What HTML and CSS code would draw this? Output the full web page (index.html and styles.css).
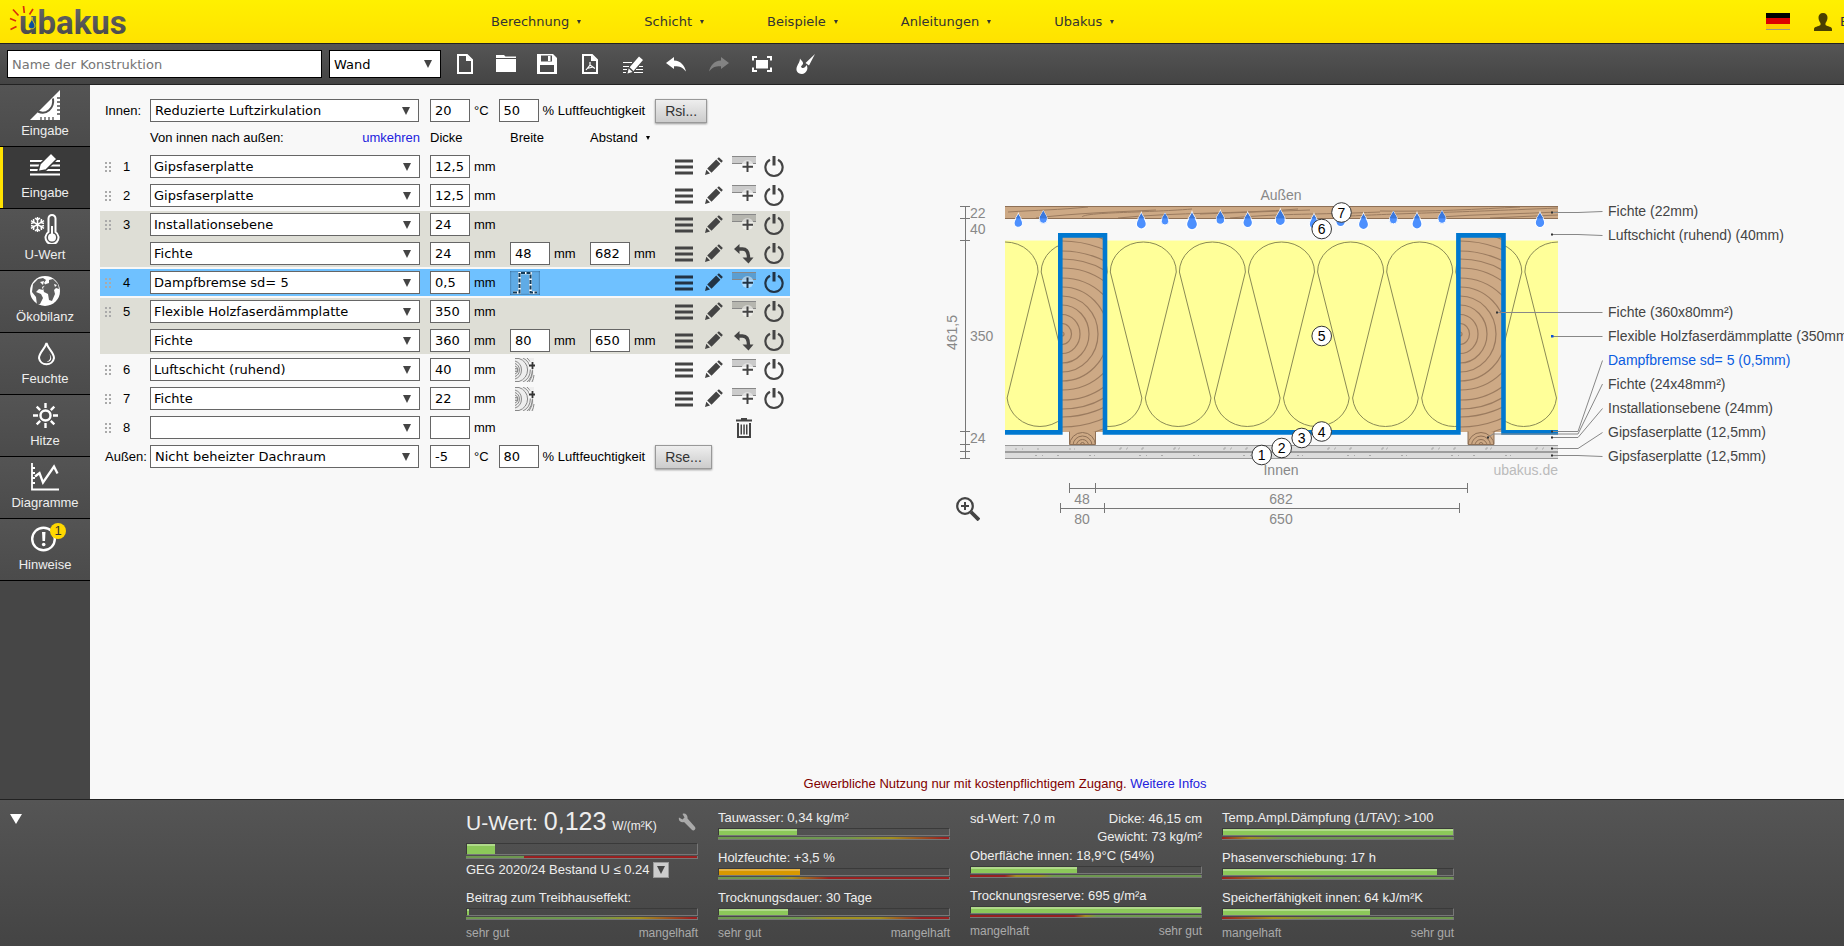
FILE: index.html
```html
<!DOCTYPE html>
<html lang="de">
<head>
  <meta charset="UTF-8">
  <meta name="viewport" content="width=device-width, initial-scale=1.0">
  <title>Ubakus</title>
  <link rel="stylesheet" href="styles.css">
</head>
<body>
  <!-- Icons -->
  <svg class="sprite" aria-hidden="true">
    <symbol id="i-menu" viewBox="0 0 18 18"><path d="M0 1.500h18v3H0zM0 7.500h18v3H0zM0 13.500h18v3H0z"/></symbol>
    <symbol id="i-pencil" viewBox="0 0 18 20"><path d="M0 18l1.300-5.200L5 16.600zM2.200 11.400L11.200 2.600l4.200 4.200-8.900 8.900zM12.200 1.700L13.900.2l4 3.900-1.600 1.700z"/></symbol>
    <symbol id="i-add" viewBox="0 0 24 22">
      <path fill="#000" opacity=".18" d="M0 0h24v8H0z"/>
      <path stroke="#888" d="M0 .5h24M0 7.500h10M21 7.500h3" fill="none"/>
      <circle cx="15.500" cy="10" r="6" fill="#fff" opacity=".45"/>
      <path d="M15.500 5.500v10.500M10.500 10.700h10.500" stroke="currentColor" stroke-width="2"/>
    </symbol>
    <symbol id="i-power" viewBox="0 0 20 22"><path d="M6 3.800a8.600 8.600 0 1 0 8 0" fill="none" stroke="currentColor" stroke-width="2.200"/><path d="M8.500 0h3v9.500h-3z"/></symbol>
    <symbol id="i-turn" viewBox="0 0 20 20"><path d="M0 5l5.500-5v10zM8.500 13.500h11L14.500 19.500z"/><path d="M5 5h3.500c4.500 0 6 3 6 9" fill="none" stroke="currentColor" stroke-width="3.400"/></symbol>
    <symbol id="i-trash" viewBox="0 0 16 20"><path d="M0 1.500h5V0h6v1.500h5v2H0zM1 5h14v15H1zM3 5v13h10V5z" fill-rule="evenodd"/><path d="M4.500 6.500h1.500v10H4.500zM7.300 6.500h1.500v10H7.300zM10 6.500h1.500v10H10z"/></symbol>
    <symbol id="i-wood" viewBox="0 0 20 24">
      <path d="M0 0h19v24H0z" fill="#eee"/>
      <g fill="none" stroke="#888"><circle cx="1" cy="12" r="1.500"/><path d="M0 8a4.200 4.200 0 0 1 0 8M0 5.500a7 7 0 0 1 0 13M0 3a9.500 9.500 0 0 1 0 18M0 .5h4a12 12 0 0 1 0 23H0M8 0a13.500 13.500 0 0 1 0 24M12 0a16 16 0 0 1 0 24M17.500 13a18 18 0 0 1-3.500 11M19 17a18 18 0 0 1-2 7"/></g>
      <path d="M14 3.500h7v8h-7z" fill="#f8f8f8"/><path d="M17.500 4v7M14 7.500h6" stroke="#333" stroke-width="1.800"/>
    </symbol>
  </svg>

  <header class="header">
    <a class="logo" href="#" aria-label="ubakus">
      <svg width="130" height="43" viewBox="0 0 130 43">
        <defs><linearGradient id="lg" x1="0" y1="0" x2="0" y2="1"><stop offset="0" stop-color="#6a6a6a"/><stop offset="1" stop-color="#444"/></linearGradient></defs>
        <text class="wordmark" x="19" y="34" fill="url(#lg)">ubakus</text>
        <path d="M32 17c.5 4-4 6-3.500 9.500.6 3 5.800 3.200 6.500-.3.500-3-3.500-5-3-9.200z" fill="#0a4ea0" stroke="#ffe900" stroke-width=".8"/>
        <path d="M10 18.500l6 2.500M13 9.500l5.500 6M23.500 6l.8 7M33 9l-3.500 5.500M10.500 29.500l6-3" stroke="#d8300c" stroke-width="1.700" fill="none"/>
      </svg>
    </a>
    <nav class="nav">
      <a class="caret" href="#">Berechnung</a>
      <a class="caret" href="#">Schicht</a>
      <a class="caret" href="#">Beispiele</a>
      <a class="caret" href="#">Anleitungen</a>
      <a class="caret" href="#">Ubakus</a>
    </nav>
    <div class="account">
      <span class="flag"></span>
      <svg width="18" height="18" viewBox="0 0 18 18" fill="#4a4000"><path d="M9 0c3 0 4.700 2 4.500 5-.2 2.500-1.300 4-2 5v2c2 1.500 6.500 1.500 6.500 4v2H0v-2c0-2.500 4.500-2.500 6.500-4v-2c-.7-1-1.800-2.500-2-5C4.300 2 6 0 9 0z"/></svg>
      <a href="#">E</a>
    </div>
  </header>

  <div class="toolbar">
    <input class="name" type="text" placeholder="Name der Konstruktion" aria-label="Name der Konstruktion">
    <span class="select type"><select aria-label="Bauteil"><option>Wand</option></select></span>
    <div class="tools">
      <button type="button" aria-label="Neu"><svg viewBox="0 0 20 20"><path d="M3 1h9l5 5v13H3z" fill="none" stroke="#fff" stroke-width="2"/><path d="M11 1v6h6z"/></svg></button>
      <button type="button" aria-label="Öffnen"><svg viewBox="0 0 20 20"><path d="M0 1h8l1.500 1.500H20V4H0zM0 5h20v13H0z"/></svg></button>
      <button type="button" aria-label="Speichern"><svg viewBox="0 0 20 20"><path d="M0 0h16l4 4v16H0zM4 1.500v6h11v-6zM3 11v7h14v-7z" fill-rule="evenodd"/><path d="M11 2h2.500v5H11z"/></svg></button>
    </div>
    <div class="tools wide">
      <button type="button" aria-label="PDF"><svg viewBox="0 0 20 20"><path d="M3 1h9l5 5v13H3z" fill="none" stroke="#fff" stroke-width="2"/><path d="M11 1v6h6z"/><path d="M10 8v3l-4 5M10 11l5 3.500M7 14.500l6-1.500" fill="none" stroke="#fff" stroke-width="1.200"/></svg></button>
      <button type="button" aria-label="Bearbeiten"><svg viewBox="0 0 20 20"><path d="M0 8.500h9M0 12.500h6M0 15.500h4M0 18.500h3M16 12.500h4M13 15.500h7M11 18.500h9" stroke="#fff" stroke-width="1.200"/><path d="M4.500 19.500l1.200-5 3.800 3.500zM6.700 13.200L16 2.500l4 3.500-9.500 11z"/></svg></button>
      <button type="button" aria-label="Rückgängig"><svg viewBox="0 0 20 20"><path d="M0 9l8-6v3.500c7 .5 10.500 5 12 11-3.500-4.500-7-5.500-12-5.300V15z"/></svg></button>
    </div>
    <div class="tools wide">
      <button type="button" class="off" aria-label="Wiederholen"><svg viewBox="0 0 20 20"><path d="M20 9l-8-6v3.500C5 7 1.500 11.500 0 17.500c3.500-4.500 7-5.500 12-5.300V15z"/></svg></button>
      <button type="button" aria-label="Vollbild"><svg viewBox="0 0 20 20"><path d="M4 6h12v8.500H4z"/><path d="M1 6.500V3h4M15 3h4v3.500M19 13.500V17h-4M5 17H1v-3.500" fill="none" stroke="#fff" stroke-width="2"/></svg></button>
      <button type="button" aria-label="Farben"><svg viewBox="0 0 20 20"><path d="M20 0l-6 11.500-3.500-2.500zM5 4.500c1 2 3.500 3 3 5.500L6 12.500c1 2.500 4 2 5.500-1.500 2.500 3.500-.5 9-4.500 9-5 0-6.500-4-5-7.500C3 9.500 5 8 5 4.500z"/></svg></button>
    </div>
  </div>

  <div class="main">
    <nav class="sidebar">
      <a href="#"><svg viewBox="0 0 30 30"><path d="M30 0v30H0z"/><path d="M8 21.500c8 4 16.500-3 15-13" fill="none" stroke="#505050" stroke-width="2"/><path d="M11 27v3M15 27v3M19 27v3M23 27v3M27 24h3M27 20h3M27 16h3M27 12h3M27 8h3" stroke="#505050" stroke-width="1.300"/></svg>Eingabe</a>
      <a href="#" class="active"><svg viewBox="0 0 30 30"><path d="M0 9h30M0 13.500h30M0 18h30M0 22.500h30" stroke="#fff" stroke-width="2"/><path d="M8 19.500l2-7.500L21 1l6 6-11 11z" fill="#fff" stroke="#3a3a3a" stroke-width="1.500"/></svg>Eingabe</a>
      <a href="#"><svg viewBox="0 0 30 30"><path d="M7.500 3v15M1 6.700l13 7.600M1 14.300l13-7.600M5 4l2.500 2L10 4M5 17l2.500-2 2.500 2M1 9.500L4 8.500 3.500 5M11.500 16l-.5-3.500 3-1M1 11.500l3 1L3.500 16M11.500 5L11 8.500l3 1" fill="none" stroke="#fff" stroke-width="1.500"/><path d="M18.500 18V4.500a3.500 3.500 0 0 1 7 0V18a6.500 6.500 0 1 1-7 0z" fill="none" stroke="#fff" stroke-width="2"/><circle cx="22" cy="23.500" r="4"/><path d="M22 12v10" stroke="#fff" stroke-width="2"/></svg>U-Wert</a>
      <a href="#"><svg viewBox="0 0 30 30"><circle cx="15" cy="15" r="15"/><path d="M3 8l5-5 5-1 3 2-2 3 2 2-4 2 1 3-4-1-3 3 5 2 2 4-3 6-3 1-1-8-4-5zM19 4l4-1 5 5 1 5-3-1-2 2 1 4-3 7-3-1-1-6-4-2-1-4 3-4 3-1z" fill="#505050" opacity=".92"/><path d="M10 6l4-1-1 4zM24 8l3 1-2 2z"/></svg>Ökobilanz</a>
      <a href="#"><svg viewBox="0 0 30 30"><path d="M16.500 5C15 11 9 14.500 9 20a7.600 7.600 0 0 0 15 0c0-5.500-6-9-7.500-15z" fill="none" stroke="#fff" stroke-width="2"/><path d="M19.500 16c2 5-.5 7-3 8 5 0 6-4 3-8z"/></svg>Feuchte</a>
      <a href="#"><svg viewBox="0 0 30 30"><g fill="none" stroke="#fff" stroke-width="2.400"><circle cx="15.500" cy="15.500" r="5"/><path d="M15.500 3v5M15.500 23v5M3 15.500h5M23 15.500h5M6.700 6.700l3.500 3.500M20.800 20.800l3.500 3.500M6.700 24.300l3.500-3.500M20.800 10.200l3.500-3.500"/></g></svg>Hitze</a>
      <a href="#"><svg viewBox="0 0 30 30"><path d="M2 1v26.500h27M2 6h3M2 11h3M2 16h3M2 21h3" fill="none" stroke="#fff" stroke-width="1.800"/><path d="M5 14.500l4.500-3.500 3.500 9.500L24 4.500l3.500 7" fill="none" stroke="#fff" stroke-width="2.300"/></svg>Diagramme</a>
      <a href="#"><svg viewBox="0 0 30 30"><circle cx="13.500" cy="15" r="11.300" fill="none" stroke="#fff" stroke-width="2.400"/><path d="M12 8h3.500l-.5 9h-2.500z"/><circle cx="13.700" cy="20.500" r="1.800"/></svg>Hinweise<span class="badge">1</span></a>
    </nav>

    <main class="content">
      <form class="editor">
        <div class="climate">
          <label for="innen">Innen:</label>
          <span class="select"><select id="innen"><option>Reduzierte Luftzirkulation</option></select></span>
          <span class="field"><input type="text" value="20" aria-label="Temperatur innen">°C</span>
          <span class="field"><input type="text" value="50" aria-label="Luftfeuchtigkeit innen">% Luftfeuchtigkeit</span>
          <button type="button">Rsi...</button>
        </div>
        <div class="row head">
          <span class="direction">Von innen nach außen: <a href="#">umkehren</a></span>
          <span>Dicke</span>
          <span>Breite</span>
          <span class="caret">Abstand</span>
        </div>

        <div class="layer">
          <div class="row">
            <span class="num">1</span>
            <span class="select"><select aria-label="Schicht 1"><option>Gipsfaserplatte</option></select></span>
            <span class="field"><input type="text" value="12,5" aria-label="Dicke">mm</span>
            <span class="actions">
              <button type="button" aria-label="Menü"><svg width="18" height="18"><use href="#i-menu"/></svg></button>
              <button type="button" aria-label="Bearbeiten"><svg width="18" height="20"><use href="#i-pencil"/></svg></button>
              <button type="button" aria-label="Einfügen"><svg width="24" height="22"><use href="#i-add"/></svg></button>
              <button type="button" aria-label="Ausschalten"><svg width="20" height="22"><use href="#i-power"/></svg></button>
            </span>
          </div>
        </div>
        <div class="layer">
          <div class="row">
            <span class="num">2</span>
            <span class="select"><select aria-label="Schicht 2"><option>Gipsfaserplatte</option></select></span>
            <span class="field"><input type="text" value="12,5" aria-label="Dicke">mm</span>
            <span class="actions">
              <button type="button" aria-label="Menü"><svg width="18" height="18"><use href="#i-menu"/></svg></button>
              <button type="button" aria-label="Bearbeiten"><svg width="18" height="20"><use href="#i-pencil"/></svg></button>
              <button type="button" aria-label="Einfügen"><svg width="24" height="22"><use href="#i-add"/></svg></button>
              <button type="button" aria-label="Ausschalten"><svg width="20" height="22"><use href="#i-power"/></svg></button>
            </span>
          </div>
        </div>
        <div class="layer group">
          <div class="row">
            <span class="num">3</span>
            <span class="select"><select aria-label="Schicht 3"><option>Installationsebene</option></select></span>
            <span class="field"><input type="text" value="24" aria-label="Dicke">mm</span>
            <span class="actions">
              <button type="button" aria-label="Menü"><svg width="18" height="18"><use href="#i-menu"/></svg></button>
              <button type="button" aria-label="Bearbeiten"><svg width="18" height="20"><use href="#i-pencil"/></svg></button>
              <button type="button" aria-label="Einfügen"><svg width="24" height="22"><use href="#i-add"/></svg></button>
              <button type="button" aria-label="Ausschalten"><svg width="20" height="22"><use href="#i-power"/></svg></button>
            </span>
          </div>
          <div class="row">
            <span class="select"><select aria-label="Balken 3"><option>Fichte</option></select></span>
            <span class="field"><input type="text" value="24" aria-label="Dicke">mm</span>
            <span class="field"><input type="text" value="48" aria-label="Breite">mm</span>
            <span class="field"><input type="text" value="682" aria-label="Abstand">mm</span>
            <span class="actions">
              <button type="button" aria-label="Menü"><svg width="18" height="18"><use href="#i-menu"/></svg></button>
              <button type="button" aria-label="Bearbeiten"><svg width="18" height="20"><use href="#i-pencil"/></svg></button>
              <button type="button" aria-label="Drehen"><svg width="20" height="20"><use href="#i-turn"/></svg></button>
              <button type="button" aria-label="Ausschalten"><svg width="20" height="22"><use href="#i-power"/></svg></button>
            </span>
          </div>
        </div>
        <div class="layer selected">
          <div class="row">
            <span class="num">4</span>
            <span class="select"><select aria-label="Schicht 4"><option>Dampfbremse sd= 5</option></select></span>
            <span class="field"><input type="text" value="0,5" aria-label="Dicke">mm</span>
            <button type="button" class="wrap" aria-label="Verlauf"><svg width="28" height="22" viewBox="0 0 28 22" fill="none"><path d="M2 20.500h6.500V1h11v19.500H26" stroke="#fff" stroke-width="2.500"/><path d="M2 20.500h6.500V1h11v19.500H26" stroke="#123a58" stroke-width="2" stroke-dasharray="4 1.500"/></svg></button>
            <span class="actions">
              <button type="button" aria-label="Menü"><svg width="18" height="18"><use href="#i-menu"/></svg></button>
              <button type="button" aria-label="Bearbeiten"><svg width="18" height="20"><use href="#i-pencil"/></svg></button>
              <button type="button" aria-label="Einfügen"><svg width="24" height="22"><use href="#i-add"/></svg></button>
              <button type="button" aria-label="Ausschalten"><svg width="20" height="22"><use href="#i-power"/></svg></button>
            </span>
          </div>
        </div>
        <div class="layer group">
          <div class="row">
            <span class="num">5</span>
            <span class="select"><select aria-label="Schicht 5"><option>Flexible Holzfaserdämmplatte</option></select></span>
            <span class="field"><input type="text" value="350" aria-label="Dicke">mm</span>
            <span class="actions">
              <button type="button" aria-label="Menü"><svg width="18" height="18"><use href="#i-menu"/></svg></button>
              <button type="button" aria-label="Bearbeiten"><svg width="18" height="20"><use href="#i-pencil"/></svg></button>
              <button type="button" aria-label="Einfügen"><svg width="24" height="22"><use href="#i-add"/></svg></button>
              <button type="button" aria-label="Ausschalten"><svg width="20" height="22"><use href="#i-power"/></svg></button>
            </span>
          </div>
          <div class="row">
            <span class="select"><select aria-label="Balken 5"><option>Fichte</option></select></span>
            <span class="field"><input type="text" value="360" aria-label="Dicke">mm</span>
            <span class="field"><input type="text" value="80" aria-label="Breite">mm</span>
            <span class="field"><input type="text" value="650" aria-label="Abstand">mm</span>
            <span class="actions">
              <button type="button" aria-label="Menü"><svg width="18" height="18"><use href="#i-menu"/></svg></button>
              <button type="button" aria-label="Bearbeiten"><svg width="18" height="20"><use href="#i-pencil"/></svg></button>
              <button type="button" aria-label="Drehen"><svg width="20" height="20"><use href="#i-turn"/></svg></button>
              <button type="button" aria-label="Ausschalten"><svg width="20" height="22"><use href="#i-power"/></svg></button>
            </span>
          </div>
        </div>
        <div class="layer">
          <div class="row">
            <span class="num">6</span>
            <span class="select"><select aria-label="Schicht 6"><option>Luftschicht (ruhend)</option></select></span>
            <span class="field"><input type="text" value="40" aria-label="Dicke">mm</span>
            <button type="button" class="beam" aria-label="Balken hinzufügen"><svg width="20" height="24"><use href="#i-wood"/></svg></button>
            <span class="actions">
              <button type="button" aria-label="Menü"><svg width="18" height="18"><use href="#i-menu"/></svg></button>
              <button type="button" aria-label="Bearbeiten"><svg width="18" height="20"><use href="#i-pencil"/></svg></button>
              <button type="button" aria-label="Einfügen"><svg width="24" height="22"><use href="#i-add"/></svg></button>
              <button type="button" aria-label="Ausschalten"><svg width="20" height="22"><use href="#i-power"/></svg></button>
            </span>
          </div>
        </div>
        <div class="layer">
          <div class="row">
            <span class="num">7</span>
            <span class="select"><select aria-label="Schicht 7"><option>Fichte</option></select></span>
            <span class="field"><input type="text" value="22" aria-label="Dicke">mm</span>
            <button type="button" class="beam" aria-label="Balken hinzufügen"><svg width="20" height="24"><use href="#i-wood"/></svg></button>
            <span class="actions">
              <button type="button" aria-label="Menü"><svg width="18" height="18"><use href="#i-menu"/></svg></button>
              <button type="button" aria-label="Bearbeiten"><svg width="18" height="20"><use href="#i-pencil"/></svg></button>
              <button type="button" aria-label="Einfügen"><svg width="24" height="22"><use href="#i-add"/></svg></button>
              <button type="button" aria-label="Ausschalten"><svg width="20" height="22"><use href="#i-power"/></svg></button>
            </span>
          </div>
        </div>
        <div class="layer">
          <div class="row">
            <span class="num">8</span>
            <span class="select"><select aria-label="Schicht 8"><option></option></select></span>
            <span class="field"><input type="text" value="" aria-label="Dicke">mm</span>
            <span class="actions">
              <button type="button" class="trash" aria-label="Löschen"><svg width="16" height="20"><use href="#i-trash"/></svg></button>
            </span>
          </div>
        </div>

        <div class="climate outer">
          <label for="aussen">Außen:</label>
          <span class="select"><select id="aussen"><option>Nicht beheizter Dachraum</option></select></span>
          <span class="field"><input type="text" value="-5" aria-label="Temperatur außen">°C</span>
          <span class="field"><input type="text" value="80" aria-label="Luftfeuchtigkeit außen">% Luftfeuchtigkeit</span>
          <button type="button">Rse...</button>
        </div>
      </form>

      <!-- Cross section -->
      <div class="drawing">
        <svg class="section" width="914" height="360" viewBox="930 180 914 360">
          <defs>
            <clipPath id="c-wall"><path d="M1005 200h553v262h-553z"/></clipPath>
            <clipPath id="c-board"><path d="M1005 206h553v12.500h-553z"/></clipPath>
            <clipPath id="c-post"><path d="M0 0h42v195H0z"/></clipPath>
            <clipPath id="c-batten"><path d="M0 0h26v13H0z"/></clipPath>
            <path id="drop" d="M0-8C-1-5-5-1-5 3a5 5 0 0 0 10 0C5-1 1-5 0-8z"/>
            <g id="post">
              <path d="M0 0h42v195H0z" fill="#cda985"/>
              <g clip-path="url(#c-post)" fill="none" stroke="#9b7b5f" stroke-width="1.200">
                <ellipse cx="0" cy="97" rx="2" ry="2"/><ellipse cx="0" cy="97" rx="9.500" ry="10.500"/><ellipse cx="0" cy="97" rx="18" ry="19.500"/><ellipse cx="0" cy="97" rx="27" ry="29"/><ellipse cx="0" cy="97" rx="36" ry="38"/><ellipse cx="0" cy="97" rx="46" ry="47"/><ellipse cx="0" cy="97" rx="58" ry="56"/><ellipse cx="0" cy="97" rx="70" ry="66"/><ellipse cx="0" cy="97" rx="80" ry="75"/><ellipse cx="0" cy="97" rx="90" ry="83"/><ellipse cx="0" cy="97" rx="100" ry="93"/><ellipse cx="0" cy="97" rx="106" ry="103"/>
              </g>
            </g>
            <g id="batten">
              <path d="M0 0h26v13H0z" fill="#cda985"/>
              <g clip-path="url(#c-batten)" fill="none" stroke="#8e7056"><circle cx="13" cy="13" r="2"/><circle cx="13" cy="14" r="6"/><circle cx="13" cy="14" r="9.500"/><circle cx="13" cy="14" r="13"/></g>
              <path d="M0 0v13h26V0" fill="none" stroke="#8e7056"/>
            </g>
            <g id="drops">
              <use href="#drop" transform="translate(1018.300 220.500) scale(.85)"/>
              <use href="#drop" transform="translate(1043.300 217) scale(.8)"/>
              <use href="#drop" transform="translate(1141.300 221)"/>
              <use href="#drop" transform="translate(1165 219) scale(.75)"/>
              <use href="#drop" transform="translate(1192 221) scale(1.100)"/>
              <use href="#drop" transform="translate(1220.300 217.500) scale(.85)"/>
              <use href="#drop" transform="translate(1247.700 220) scale(.95)"/>
              <use href="#drop" transform="translate(1280.300 217.500)"/>
              <use href="#drop" transform="translate(1314 221.500) scale(.95)"/>
              <use href="#drop" transform="translate(1340.600 219) scale(.95)"/>
              <use href="#drop" transform="translate(1363.500 221.500)"/>
              <use href="#drop" transform="translate(1393.400 217.500) scale(.8)"/>
              <use href="#drop" transform="translate(1417 221)"/>
              <use href="#drop" transform="translate(1442 217) scale(.8)"/>
              <use href="#drop" transform="translate(1540 220) scale(.95)"/>
            </g>
          </defs>

          <g clip-path="url(#c-wall)">
            <path d="M1005 240.500h553v191.500h-553z" fill="#ff9"/>
            <path d="M972.100 272 a33 30 0 0 1 66 0 l-31 126 a33 31.500 0 0 0 65.700 0 l-31.600-126 a33 30 0 0 1 66 0 l-31 126 a33 31.500 0 0 0 65.700 0 l-31.600-126 a33 30 0 0 1 66 0 l-31 126 a33 31.500 0 0 0 65.700 0 l-31.600-126 a33 30 0 0 1 66 0 l-31 126 a33 31.500 0 0 0 65.700 0 l-31.600-126 a33 30 0 0 1 66 0 l-31 126 a33 31.500 0 0 0 65.700 0 l-31.600-126 a33 30 0 0 1 66 0 l-31 126 a33 31.500 0 0 0 65.700 0 l-31.600-126 a33 30 0 0 1 66 0 l-31 126 a33 31.500 0 0 0 65.700 0 l-31.600-126 a33 30 0 0 1 66 0 l-31 126 a33 31.500 0 0 0 65.700 0 l-31.600-126 a33 30 0 0 1 66 0 l-31 126" fill="none" stroke="#8a8a55"/>
            <path d="M1005 206h553v12.500h-553z" fill="#cda985"/>
            <path d="M1008 212c30-2 50-2 80-5M1036 218c40-5 80-6 120-8M1082 217c3-5 60-4 110-8M1118 218c60-6 120-4 180-9M1200 214l110-4M1230 218c60-5 80-3 150-6M1350 216c60-3 90-3 208-8M1380 211c50 1 100-2 140-4M1440 217c40-3 80-3 118-5M1490 218l68-3" fill="none" stroke="#9b7b5f"/>
            <path d="M1005 206.500h553M1005 218.500h553" stroke="#8e7056"/>
            <path d="M1005 445h553v14h-553z" fill="#dcdcdc"/>
            <path d="M1015 449h543M1035 455.500h523M1120 448h438" stroke="#aaa" stroke-dasharray="2 5 1 14 2 30 2 3 1 44"/>
            <path d="M1005 445.500h553M1005 458.500h553" stroke="#999"/>
            <path d="M1005 452h553" stroke="#888" stroke-width="1.500"/>
          </g>
          <use href="#post" x="1062" y="237"/>
          <use href="#post" x="1460" y="237"/>
          <use href="#batten" x="1069.500" y="431.500"/>
          <use href="#batten" x="1468" y="431.500"/>
          <path d="M1005 432.400h55.300V235.400h44.700v197h353.400v-197h45.100v197h54.500" fill="none" stroke="#0078d0" stroke-width="4.600"/>
          <use href="#drops" fill="#4d90fe" stroke="#fff" stroke-width="1.200"/>
          <use href="#drops" fill="#3a77dc" clip-path="url(#c-board)"/>

          <!-- Dimensions -->
          <g stroke="#777" fill="none">
            <path d="M965.500 206v253M960 206.500h10M960 218.500h10M960 240.500h10M960 431.500h10M960 444.500h10M960 451.500h10M960 458.500h10"/>
            <path d="M1069 488.500h399M1069.500 483v10M1095.500 483v10M1467.500 483v10M1060 508.500h399M1060.500 503v10M1104.500 503v10M1459.500 503v10"/>
          </g>
          <g class="dim">
            <text x="970" y="218">22</text><text x="970" y="234">40</text><text x="970" y="341">350</text><text x="970" y="443">24</text>
            <text x="957" y="350" transform="rotate(-90 957 350)">461,5</text>
            <g text-anchor="middle">
              <text x="1281" y="200">Außen</text><text x="1281" y="475">Innen</text>
              <text x="1082" y="504">48</text><text x="1281" y="504">682</text>
              <text x="1082" y="524">80</text><text x="1281" y="524">650</text>
            </g>
            <text class="mark" x="1558" y="475" text-anchor="end">ubakus.de</text>
          </g>

          <!-- Labels -->
          <g stroke="#888" fill="none">
            <path d="M1552 212.500h26l24.500-1M1552 234.500h26l24.500 1M1497 312.500h105.500M1552 336.500h50.500M1552 431.500h26l24.500-71M1488 437.500l5-3.500h85l24.500-50M1552 437.500h26l24.500-29M1552 448.500h26l24.500-16M1552 455.500h26l24.500 1"/>
          </g>
          <path d="M1551 211.500h2v2h-2zM1551 233.500h2v2h-2zM1496 311.500h2v2h-2zM1551 430.500h2v2h-2zM1487 436.500h2v2h-2zM1551 436.500h2v2h-2zM1551 447.500h2v2h-2zM1551 454.500h2v2h-2z" fill="#333"/>
          <path d="M1551 335h2.500v2.500h-2.500z" fill="#0a50d8"/>
          <g class="material">
            <text x="1608" y="216">Fichte (22mm)</text>
            <text x="1608" y="240">Luftschicht (ruhend) (40mm)</text>
            <text x="1608" y="317">Fichte (360x80mm²)</text>
            <text x="1608" y="341">Flexible Holzfaserdämmplatte (350mm)</text>
            <text class="current" x="1608" y="365">Dampfbremse sd= 5 (0,5mm)</text>
            <text x="1608" y="389">Fichte (24x48mm²)</text>
            <text x="1608" y="413">Installationsebene (24mm)</text>
            <text x="1608" y="437">Gipsfaserplatte (12,5mm)</text>
            <text x="1608" y="461">Gipsfaserplatte (12,5mm)</text>
          </g>
          <g fill="#fff" stroke="#333">
            <circle cx="1261.700" cy="455" r="9.800"/><circle cx="1281.700" cy="448" r="9.800"/><circle cx="1301.700" cy="438" r="9.800"/><circle cx="1321.700" cy="431.500" r="9.800"/><circle cx="1321.700" cy="336" r="9.800"/><circle cx="1321.700" cy="229" r="9.800"/><circle cx="1341.500" cy="212.500" r="9.800"/>
          </g>
          <g class="pin" text-anchor="middle">
            <text x="1261.700" y="460">1</text><text x="1281.700" y="453">2</text><text x="1301.700" y="443">3</text><text x="1321.700" y="436.500">4</text><text x="1321.700" y="341">5</text><text x="1321.700" y="234">6</text><text x="1341.500" y="217.500">7</text>
          </g>
        </svg>
        <button type="button" class="zoom" aria-label="Vergrößern"><svg width="24" height="24" viewBox="0 0 24 24" fill="none" stroke="#444"><circle cx="9" cy="9" r="7.800" stroke-width="2.200"/><path d="M9 5v8M5 9h8" stroke-width="2"/><path d="M15 15l8 8" stroke-width="3.800"/></svg></button>
      </div>

      <p class="notice">Gewerbliche Nutzung nur mit kostenpflichtigem Zugang. <a href="#">Weitere Infos</a></p>
    </main>
  </div>

  <footer class="results">
    <button type="button" class="collapse" aria-label="Einklappen"></button>
    <div class="columns">
      <section class="col">
        <div class="uwert">
          <span>U-Wert: <b>0,123</b> <small>W/(m²K)</small></span>
          <svg width="18" height="18" viewBox="0 0 18 18" fill="#aaa"><path d="M1 4.500l3.500 2 2-2L4.500 1C7-.500 10 2 9.500 5.500L17 14c1.500 2.500-1.500 4.500-3.200 2.800L6 9C3 10 0 7.500 1 4.500z"/></svg>
        </div>
        <div class="bar big"><i class="green" style="width: 12%"></i></div>
        <div class="scale limit"></div>
        <div class="geg">GEG 2020/24 Bestand U ≤ 0.24 <button type="button" aria-label="Auswahl"></button></div>
        <div class="metric">
          <h2>Beitrag zum Treibhauseffekt:</h2>
          <div class="bar"><i class="green" style="width: 1%"></i></div>
          <div class="scale late"></div>
        </div>
        <div class="legend"><span>sehr gut</span><span>mangelhaft</span></div>
      </section>
      <section class="col">
        <div class="metric">
          <h2>Tauwasser: 0,34 kg/m²</h2>
          <div class="bar"><i class="green" style="width: 34%"></i></div>
          <div class="scale late"></div>
        </div>
        <div class="metric">
          <h2>Holzfeuchte: +3,5 %</h2>
          <div class="bar"><i class="orange" style="width: 35%"></i></div>
          <div class="scale early"></div>
        </div>
        <div class="metric">
          <h2>Trocknungsdauer: 30 Tage</h2>
          <div class="bar"><i class="green" style="width: 30%"></i></div>
          <div class="scale middle"></div>
        </div>
        <div class="legend"><span>sehr gut</span><span>mangelhaft</span></div>
      </section>
      <section class="col">
        <div class="facts"><span>sd-Wert: 7,0 m</span><span>Dicke: 46,15 cm<br>Gewicht: 73 kg/m²</span></div>
        <div class="metric">
          <h2>Oberfläche innen: 18,9°C (54%)</h2>
          <div class="bar"><i class="green" style="width: 46%"></i></div>
          <div class="scale surface"></div>
        </div>
        <div class="metric">
          <h2>Trocknungsreserve: 695 g/m²a</h2>
          <div class="bar"><i class="green" style="width: 100%"></i></div>
          <div class="scale reserve"></div>
        </div>
        <div class="legend"><span>mangelhaft</span><span>sehr gut</span></div>
      </section>
      <section class="col">
        <div class="metric">
          <h2>Temp.Ampl.Dämpfung (1/TAV): &gt;100</h2>
          <div class="bar"><i class="green" style="width: 100%"></i></div>
          <div class="scale heat"></div>
        </div>
        <div class="metric">
          <h2>Phasenverschiebung: 17 h</h2>
          <div class="bar"><i class="green" style="width: 93%"></i></div>
          <div class="scale phase"></div>
        </div>
        <div class="metric">
          <h2>Speicherfähigkeit innen: 64 kJ/m²K</h2>
          <div class="bar"><i class="green" style="width: 64%"></i></div>
          <div class="scale phase"></div>
        </div>
        <div class="legend"><span>mangelhaft</span><span>sehr gut</span></div>
      </section>
    </div>
  </footer>
</body>
</html>
```

FILE: styles.css
```css
* {
  box-sizing: border-box;
}
body {
  margin: 0;
  height: 100vh;
  display: flex;
  flex-direction: column;
  overflow: hidden;
  background-color: #f8f8f8;
  color: #000;
  font: 13px "Liberation Sans", Arial, sans-serif;
}
a {
  color: #22d;
  text-decoration: none;
}
button {
  padding: 0;
  border: none;
  background: none;
  color: inherit;
  cursor: pointer;
}
svg {
  display: block;
}
.sprite {
  display: none;
}

/* Header */
.header {
  display: flex;
  align-items: center;
  height: 44px;
  flex: none;
  background: linear-gradient(#fff000, #ffe200);
  border-bottom: 1px solid #222;
  font: 13px Verdana, "DejaVu Sans", sans-serif;
  overflow: hidden;
}
.header a {
  color: #333;
  white-space: nowrap;
}
.wordmark {
  font: bold 33px Roboto, sans-serif;
}
.nav {
  display: flex;
  gap: 63px;
  margin-left: 361px;
}
.caret::after {
  content: "";
  display: inline-block;
  margin-left: 8px;
  vertical-align: 2px;
  border: 2px solid transparent;
  border-top: 4px solid currentColor;
  border-bottom: none;
}
.account {
  display: flex;
  align-items: center;
  margin-left: auto;
  width: 78px;
  flex: none;
}
.account svg {
  margin: 0 8px 0 24px;
  flex: none;
}
.flag {
  width: 24px;
  height: 17px;
  flex: none;
  background: linear-gradient(#000 5px, #d00 5px, #d00 11px, #fc0 11px, #fc0 16px, #998 16px);
}

/* Toolbar */
.toolbar {
  display: flex;
  align-items: center;
  height: 41px;
  flex: none;
  padding-left: 7px;
  background: linear-gradient(#555, #444);
  border-bottom: 1px solid #222;
}
.toolbar .name {
  width: 315px;
  height: 28px;
  margin-right: 7px;
  padding: 0 4px;
  border: 1px solid #000;
  font: 13px Verdana, "DejaVu Sans", sans-serif;
}
.toolbar .type {
  width: 112px;
  height: 28px;
  margin-right: 14px;
}
.toolbar .type select {
  border-color: #000;
}
.tools {
  display: flex;
  gap: 21px;
  margin-right: 23px;
}
.tools.wide {
  gap: 23px;
}
.tools svg {
  width: 20px;
  height: 20px;
  fill: #fff;
}
.tools .off {
  opacity: 0.3;
}

/* Sidebar */
.main {
  display: flex;
  flex: 1;
  min-height: 0;
}
.sidebar {
  width: 90px;
  flex: none;
  background-color: #464646;
}
.sidebar a {
  position: relative;
  display: block;
  height: 62px;
  padding-top: 5px;
  border-bottom: 1px solid #000;
  background: linear-gradient(#545454, #4b4b4b);
  color: #eee;
  text-align: center;
  line-height: 16px;
}
.sidebar a.active {
  background: #3a3a3a;
  box-shadow: inset 3px 0 #ffe200;
}
.sidebar svg {
  width: 30px;
  height: 30px;
  margin: 0 auto 3px;
  fill: #fff;
}
.badge {
  position: absolute;
  top: 4px;
  left: 50px;
  width: 16px;
  height: 16px;
  border-radius: 8px;
  background-color: #ffd800;
  color: #333;
}

/* Layer editor */
.content {
  position: relative;
  display: flex;
  flex-wrap: wrap;
  align-content: space-between;
  flex: 1;
  min-width: 0;
  overflow: hidden;
}
.editor {
  width: 690px;
  margin: 14px 0 0 10px;
  flex: none;
}
.select {
  position: relative;
  display: block;
  height: 23px;
}
.select::after {
  content: "";
  position: absolute;
  top: 50%;
  right: 9px;
  margin-top: -4px;
  border: 4px solid transparent;
  border-top: 8px solid #444;
  border-bottom: none;
  pointer-events: none;
}
.select select {
  width: 100%;
  height: 100%;
  padding: 0 4px;
  appearance: none;
  border: 1px solid #666;
  border-radius: 0;
  background-color: #fff;
  color: #000;
  font: 13px Verdana, "DejaVu Sans", sans-serif;
}
.row .select select {
  padding: 0 3px;
}
.field {
  display: flex;
  align-items: center;
  gap: 4px;
}
.field input {
  width: 40px;
  height: 23px;
  padding: 0 4px;
  border: 1px solid #666;
  font: 13px Verdana, "DejaVu Sans", sans-serif;
}
.climate {
  display: flex;
  align-items: center;
  height: 23px;
}
.climate.outer {
  margin-top: 4px;
}
.climate label {
  width: 50px;
  padding-left: 5px;
}
.climate .select {
  width: 269px;
  margin-right: 11px;
}
.climate .field {
  margin-right: 10px;
}
.climate button {
  height: 24px;
  padding: 0 9px;
  border: 1px solid #999;
  background: linear-gradient(#eee, #ccc);
  box-shadow: 0 1px 2px rgba(0, 0, 0, 0.4);
  color: #333;
  font: 14px "Liberation Sans", Arial, sans-serif;
}
.row {
  display: grid;
  grid-template-columns: 40px 270px 70px 70px 69px 120px;
  column-gap: 10px;
  align-items: center;
  height: 27px;
}
.row > .select {
  grid-column: 2;
}
.row > .actions {
  grid-column: 6;
}
.head {
  height: 31px;
}
.direction {
  grid-column: 2;
  display: flex;
  justify-content: space-between;
}
.num {
  display: flex;
  align-items: center;
}
/* drag handle */
.num::before {
  content: "";
  width: 2px;
  height: 2px;
  margin: 0 16px 8px 5px;
  background-color: #aaa;
  box-shadow: 4px 0 #aaa, 0 4px #aaa, 4px 4px #aaa, 0 8px #aaa, 4px 8px #aaa;
}
.layer {
  margin-bottom: 2px;
}
.layer .row + .row {
  margin-top: 2px;
}
.group {
  background-color: #deded6;
}
.selected {
  background-color: #6fc1ff;
}
.actions {
  display: grid;
  grid-template-columns: repeat(4, 30px);
  color: #444;
  fill: currentColor;
}
.selected .actions {
  color: #234;
}
.actions button {
  display: flex;
  align-items: center;
  justify-content: center;
  height: 23px;
}
.actions .trash {
  grid-column: 3;
}
.wrap {
  display: flex;
  align-items: center;
  justify-content: center;
  width: 30px;
  height: 24px;
  background-color: #5fabe6;
  box-shadow: inset 0 0 2px #246;
}
.beam {
  width: 30px;
  padding-left: 5px;
}

/* Cross section */
.drawing {
  position: relative;
  margin: 95px 0 0 auto;
}
.zoom {
  position: absolute;
  left: 26px;
  top: 317px;
}
.section {
  font-size: 14px;
}
.dim {
  fill: #888;
}
.mark {
  fill: #bbb;
}
.material {
  fill: #444;
}
.current {
  fill: #0a5ce0;
}
.pin {
  fill: #000;
}
.notice {
  width: 100%;
  margin: 0;
  padding: 0 0 8px 76px;
  color: #800000;
  text-align: center;
}

/* Results */
.results {
  position: relative;
  height: 147px;
  flex: none;
  padding: 10px 0 0 76px;
  border-top: 1px solid #222;
  background: linear-gradient(#555, #444);
  color: #eee;
}
.collapse {
  position: absolute;
  top: 14px;
  left: 10px;
  border: 6px solid transparent;
  border-top: 10px solid #fff;
  border-bottom: none;
}
.columns {
  display: flex;
  justify-content: center;
  gap: 20px;
}
.col {
  width: 232px;
}
.uwert {
  display: flex;
  align-items: center;
  justify-content: space-between;
  height: 33px;
  padding: 0 2px 10px 0;
  font-size: 21px;
  white-space: nowrap;
}
.uwert b {
  font-size: 25px;
  font-weight: normal;
}
.uwert small {
  font-size: 12px;
}
.geg {
  display: flex;
  align-items: center;
  gap: 4px;
  height: 21px;
}
.geg button {
  width: 16px;
  height: 16px;
  border: 1px solid #999;
  background-color: #ccc;
}
.geg button::after {
  content: "";
  display: block;
  width: 0;
  margin: 0 auto;
  border: 4px solid transparent;
  border-top: 8px solid #444;
  border-bottom: none;
}
.metric + .metric,
.geg + .metric {
  margin-top: 10px;
}
.metric h2 {
  margin: 0 0 2px;
  font-size: 13px;
  font-weight: normal;
  line-height: 16px;
}
.bar {
  height: 8px;
  margin-bottom: 1px;
  border: 1px solid #777;
  border-top-color: #3a3a3a;
  border-left-color: #3a3a3a;
}
.bar.big {
  height: 12px;
}
.bar i {
  display: block;
  height: 100%;
  border-top: 2px solid #b0da8a;
  background-color: #8cc85a;
}
.bar i.orange {
  border-top-color: #e5b040;
  background-color: #d89800;
}
.scale {
  height: 3px;
  border-bottom: 1px solid #777;
  border-right: 1px solid #777;
}
.limit {
  background-image: linear-gradient(90deg, #6e9850 25%, #982020 25%);
}
.late {
  background-image: linear-gradient(90deg, #6e9850 55%, #a09020 75%, #982020 98%);
}
.early {
  background-image: linear-gradient(90deg, #6e9850 25%, #a09020 32%, #982020 48%);
}
.middle {
  background-image: linear-gradient(90deg, #6e9850 35%, #a09020 48%, #a09020 70%, #982020 88%);
}
.surface {
  background-image: linear-gradient(90deg, #982020 15%, #a09020 20%, #a09020 30%, #6e9850 36%);
}
.reserve {
  background-image: linear-gradient(90deg, #982020 45%, #a09020 50%, #6e9850 55%);
}
.heat {
  background-image: linear-gradient(90deg, #982020, #a09020 12%, #6e9850 25%);
}
.phase {
  background-image: linear-gradient(90deg, #982020, #a09020 22%, #6e9850 45%);
}
.facts {
  display: flex;
  justify-content: space-between;
  height: 38px;
  line-height: 18px;
  text-align: right;
}
.legend {
  display: flex;
  justify-content: space-between;
  margin-top: 5px;
  color: #aaa;
  font-size: 12px;
  line-height: 16px;
}
```
